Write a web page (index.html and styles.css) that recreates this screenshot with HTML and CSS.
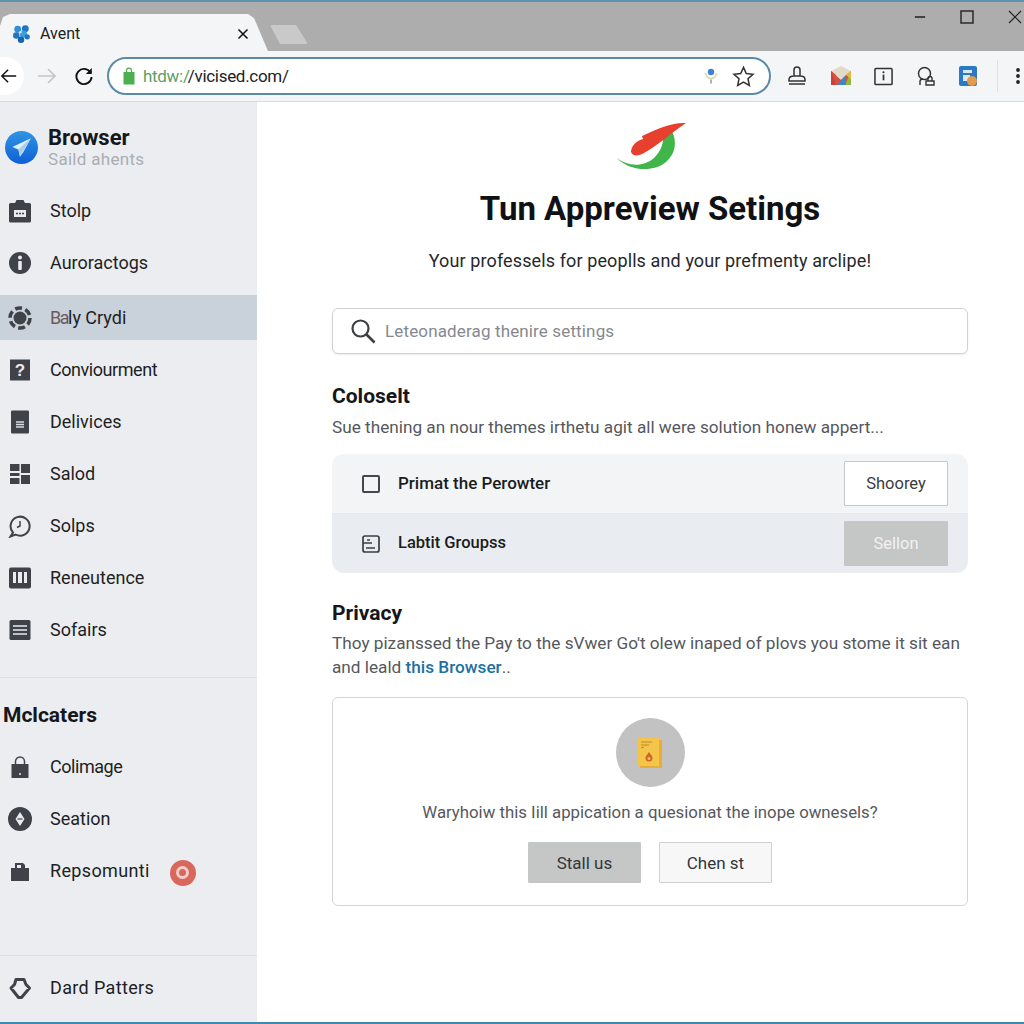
FILE: index.html

```html
<!DOCTYPE html>
<html lang="en">
<head>
  <meta charset="UTF-8" />
  <title>Avent</title>
  <link rel="stylesheet" href="styles.css">
</head>
<body>
  <header class="chrome">
    <div class="tabstrip">
      <div class="tab">
        <svg class="favicon" viewBox="0 0 20 20"><circle cx="6" cy="5" r="3.6" fill="#2f8fd8"/><circle cx="14" cy="4.500" r="3.600" fill="#1f74c4"/><circle cx="4.500" cy="11.500" r="3.400" fill="#1f74c4"/><circle cx="12" cy="10" r="3.800" fill="#3aa0e2"/><circle cx="16" cy="13" r="2.800" fill="#1f74c4"/><circle cx="9.500" cy="16" r="3.400" fill="#1763b0"/><circle cx="9" cy="8" r="1.200" fill="#e9f1f8"/></svg>
        <span class="tab-title">Avent</span>
        <svg class="tab-close" viewBox="0 0 12 12"><path d="M1.500 1.500l9 9M10.500 1.500l-9 9" stroke="#111" stroke-width="1.500" fill="none"/></svg>
      </div>
      <div class="newtab"></div>
      <div class="winctl">
        <svg viewBox="0 0 14 14" class="win-min"><path d="M1 7h12" stroke="#111" stroke-width="1.600"/></svg>
        <svg viewBox="0 0 14 14" class="win-max"><rect x="1" y="1" width="12" height="12" fill="none" stroke="#222" stroke-width="1.400"/></svg>
        <svg viewBox="0 0 14 14" class="win-close"><path d="M1 1l12 12M13 1L1 13" stroke="#222" stroke-width="1.200" fill="none"/></svg>
      </div>
    </div>
    <div class="toolbar">
      <div class="nav">
        <div class="back"><svg viewBox="0 0 20 20" width="20" height="20"><path d="M18 10H2M9 3l-7 7 7 7" stroke="#111" stroke-width="1.600" fill="none"/></svg></div>
        <svg class="fwd" viewBox="0 0 20 20" width="20" height="20"><path d="M1 10h17M11 3l7 7-7 7" stroke="#c4c6c8" stroke-width="1.700" fill="none"/></svg>
        <svg class="reload" viewBox="0 0 20 20" width="20" height="20"><path d="M16.500 6.500A7.600 7.600 0 1 0 17.600 11" stroke="#111" stroke-width="1.900" fill="none"/><path d="M17.800 2v6h-6z" fill="#111"/></svg>
      </div>
      <div class="omnibox">
        <svg class="lock" viewBox="0 0 12 18" width="12" height="18"><path d="M3.500 5V3.600a2.500 2.500 0 0 1 5 0V5" stroke="#4caf50" stroke-width="1.200" fill="none"/><rect x="0.500" y="5" width="11" height="12.500" fill="#4caf50"/></svg>
        <span class="url"><span class="url-scheme">htdw:/</span>/vicised.com/</span>
        <svg class="mic" viewBox="0 0 14 20" width="14" height="20"><path d="M1.500 7a5.500 5.500 0 0 0 11 0" stroke="#d7dbb0" stroke-width="1.600" fill="none"/><circle cx="7" cy="6" r="3.200" fill="#3f83cf"/><path d="M7 13.500v4" stroke="#8a9198" stroke-width="1.400"/></svg>
        <svg class="star" viewBox="0 0 24 24" width="23" height="23"><path d="M12 2.500l2.900 6.400 7 .8-5.200 4.700 1.400 6.900-6.100-3.500-6.100 3.500 1.400-6.900L2.100 9.700l7-.8z" fill="none" stroke="#333" stroke-width="1.600"/></svg>
      </div>
      <div class="extensions">
        <svg viewBox="0 0 20 20" width="20" height="20"><path d="M7 10V4a3 3 0 0 1 6 0v6M2 13.500c0-2 1.500-3.500 5-3.500h6c3.500 0 5 1.500 5 3.500V15H2zM2 18h16" fill="none" stroke="#333" stroke-width="1.500"/></svg>
        <svg viewBox="0 0 22 22" width="22" height="22"><path d="M1 6l10-5 10 5v14H1z" fill="#e3dbc9"/><path d="M1 6v14h5V10z" fill="#c8413c"/><path d="M21 6v14h-5V10z" fill="#8fb93f"/><path d="M1 6l10 9 10-9-6 14H6z" fill="#d7503f"/><path d="M11 15l5-5v10H8z" fill="#3b87cc"/><path d="M16 10l5-4v8z" fill="#e4b83c"/></svg>
        <svg viewBox="0 0 20 20" width="19" height="19"><rect x="1" y="1.500" width="18" height="17" rx="1" fill="none" stroke="#333" stroke-width="1.600"/><path d="M10 8v6" stroke="#333" stroke-width="1.800"/><circle cx="10" cy="5.500" r="1.100" fill="#333"/></svg>
        <svg viewBox="0 0 20 20" width="20" height="20"><circle cx="8.500" cy="7.500" r="6" fill="none" stroke="#333" stroke-width="1.500"/><path d="M4 19v-3.500c0-1.500 1-2.500 3-2.500M10 19v-4h8v4zM12 15v-2.500a2 2 0 0 1 4 0V15" fill="none" stroke="#333" stroke-width="1.400"/></svg>
        <svg viewBox="0 0 20 22" width="20" height="22"><rect x="1" y="1" width="18" height="20" rx="2" fill="#2a78c6"/><path d="M5 5h9v3H5zM5 10h7v6H5z" fill="#d7e8f5"/><circle cx="14" cy="16" r="5" fill="#e39a4a"/></svg>
        <span class="ext-sep"></span>
        <svg class="kebab" viewBox="0 0 6 20" width="6" height="20"><circle cx="3" cy="4" r="1.900" fill="#222"/><circle cx="3" cy="10" r="1.900" fill="#222"/><circle cx="3" cy="16" r="1.900" fill="#222"/></svg>
      </div>
    </div>
  </header>

  <div class="shell">
    <aside class="sidebar">
      <div class="brand">
        <svg viewBox="0 0 32 32" width="33" height="33"><defs><linearGradient id="brandBlue" x1="0" y1="0" x2="0" y2="1"><stop offset="0" stop-color="#2f95e4"/><stop offset="1" stop-color="#0e5fd6"/></linearGradient></defs><circle cx="16" cy="16" r="16" fill="url(#brandBlue)"/><path d="M25 7L7 15.500l6 2.500 1.500 7 3.500-5z" fill="#dcecf9"/><path d="M25 7L13 18l1.500 7z" fill="#a8cdef"/></svg>
        <div class="brand-text">
          <div class="brand-name">Browser</div>
          <div class="brand-sub">Saild ahents</div>
        </div>
      </div>

      <nav class="nav-list">
        <a class="item"><svg viewBox="0 0 24 24"><path d="M2.500 4H7l1.500-3h7L17 4h4.500A1.500 1.500 0 0 1 23 5.500V22a1.500 1.500 0 0 1-1.500 1.500h-19A1.500 1.500 0 0 1 1 22V5.500A1.500 1.500 0 0 1 2.500 4z" fill="#3f4349"/><rect x="6" y="11" width="12" height="7" fill="#e9ebef"/><path d="M8 14.500h8" stroke="#3f4349" stroke-width="1.400" stroke-dasharray="2 1"/></svg><span>Stolp</span></a>
        <a class="item"><svg viewBox="0 0 24 24"><circle cx="12" cy="12" r="11" fill="#3f4349"/><circle cx="12" cy="6.500" r="2" fill="#e9ebef"/><rect x="10.200" y="10" width="3.600" height="9" rx="1" fill="#e9ebef"/></svg><span>Auroractogs</span></a>
        <a class="item active"><svg viewBox="0 0 24 24"><circle cx="12" cy="12" r="6.500" fill="#3f4349"/><circle cx="12" cy="12" r="10" fill="none" stroke="#3f4349" stroke-width="3.600" stroke-dasharray="7 3.470"/></svg><span><span class="smudge">Ba</span>ly Crydi</span></a>
        <a class="item"><svg viewBox="0 0 24 24"><rect x="2" y="1.500" width="20" height="21" fill="#3f4349"/><text x="12" y="18" class="glyph">?</text></svg><span class="tight">Conviourment</span></a>
        <a class="item"><svg viewBox="0 0 24 24"><rect x="3" y="0.500" width="18" height="23" rx="1" fill="#3f4349"/><path d="M8 12h8M8 14.500h8M8 17h8" stroke="#d9dce1" stroke-width="1.300"/></svg><span>Delivices</span></a>
        <a class="item"><svg viewBox="0 0 24 24"><path d="M2 2h9.500v7H2zM13 2h9v9h-9zM2 11h9.500v3H2zM2 16h9.500v6H2zM13 13h9v9h-9z" fill="#3f4349"/></svg><span>Salod</span></a>
        <a class="item"><svg viewBox="0 0 24 24"><path d="M5 18.500A9.500 9.500 0 1 1 7.500 20.500L2.500 22.500z" fill="none" stroke="#3f4349" stroke-width="2"/><path d="M12 7v5l-3 1.500" fill="none" stroke="#3f4349" stroke-width="1.500"/></svg><span>Solps</span></a>
        <a class="item"><svg viewBox="0 0 24 24"><rect x="1" y="1.500" width="22" height="21" rx="2" fill="#3f4349"/><path d="M5 6h3v11H5zM10 6h4v11h-4zM16 6h3v11h-3z" fill="#e9ebef"/></svg><span>Reneutence</span></a>
        <a class="item"><svg viewBox="0 0 24 24"><rect x="1.500" y="2" width="21" height="20" rx="1.500" fill="#3f4349"/><path d="M5 8h14M5 12h14M5 16h14" stroke="#e9ebef" stroke-width="1.500"/></svg><span>Sofairs</span></a>
      </nav>

      <div class="side-rule rule-one"></div>
      <h3 class="side-head">Mclcaters</h3>

      <nav class="nav-list lower">
        <a class="item"><svg viewBox="0 0 24 24"><path d="M7.500 9V6.500a4.500 4.500 0 0 1 9 0V9" fill="none" stroke="#3f4349" stroke-width="1.500"/><path d="M3.500 9h17v14h-17z" fill="#3f4349"/><circle cx="12" cy="19" r="1" fill="#e9ebef"/></svg><span class="tight">Colimage</span></a>
        <a class="item"><svg viewBox="0 0 24 24"><circle cx="12" cy="12" r="12" fill="#3f4349"/><path d="M12 5l4.500 7-4.500 7-4.500-7z" fill="#e9ebef"/><path d="M9.500 12h5" stroke="#3f4349" stroke-width="1.200"/></svg><span>Seation</span></a>
        <a class="item"><svg viewBox="0 0 24 24"><path d="M3 9h4V4h8l2 2v3h4v13H3z" fill="#3f4349"/><path d="M9 6h4v3H9z" fill="#e9ebef"/></svg><span class="wide">Repsomunti</span><i class="alert"><b></b></i></a>
      </nav>

      <div class="side-rule rule-two"></div>
      <a class="item foot"><svg viewBox="0 0 24 24"><path d="M8 3.500h8l2 5 3.500 3.500-8 9.500h-3L3 12l3.500-3.500z" fill="none" stroke="#3f4349" stroke-width="3" stroke-linejoin="round"/></svg><span class="wide">Dard Patters</span></a>
    </aside>

    <main class="content">
      <svg class="logo" viewBox="0 0 76 56" width="76" height="56"><path d="M3 38C14 47 30 47 40 38C47 31 50 23 49 14L58 11C63 22 62 33 52 42C41 52 16 52 3 38z" fill="#3fb54a"/><path d="M72 3C60 2 44 8 28 16L29 19C21 21 17 27 17 32C19 37 25 36 30 33C42 27 58 12 72 3z" fill="#e8402f"/></svg>
      <h1>Tun Appreview Setings</h1>
      <p class="lead">Your professels for peoplls and your prefmenty arclipe!</p>

      <div class="search">
        <svg viewBox="0 0 26 26" width="26" height="26"><circle cx="10.500" cy="10.500" r="8" fill="none" stroke="#3c3f44" stroke-width="2.200"/><path d="M16.500 16.500l8 8" stroke="#3c3f44" stroke-width="2.600"/></svg>
        <span>Leteonaderag thenire settings</span>
      </div>

      <h2 class="sec-head">Coloselt</h2>
      <p class="sec-text">Sue thening an nour themes irthetu agit all were solution honew appert...</p>

      <div class="panel">
        <div class="row">
          <span class="check"></span>
          <span class="row-label label-first">Primat the Perowter</span>
          <button class="btn btn-white">Shoorey</button>
        </div>
        <div class="row row-alt">
          <svg class="row-icon" viewBox="0 0 18 18" width="18" height="18"><rect x="1" y="1" width="16" height="16" rx="2" fill="none" stroke="#3c3f44" stroke-width="1.700"/><path d="M1 8h9M5 5h3M4 13h9" stroke="#3c3f44" stroke-width="1.500" fill="none"/></svg>
          <span class="row-label label-thin">Labtit Groupss</span>
          <button class="btn btn-grey">Sellon</button>
        </div>
      </div>

      <h2 class="sec-head privacy">Privacy</h2>
      <p class="sec-text para">
        <span class="line">Thoy pizanssed the Pay to the sVwer Go't olew inaped of plovs you stome it sit ean</span>
        <span class="line">and leald <a class="link">this Browser</a>..</span>
      </p>

      <div class="card">
        <div class="circle">
          <svg viewBox="0 0 26 32" width="26" height="32"><path d="M1 1h21v28H1z" fill="#f5c54b"/><path d="M22 3h3v28H3v-2h19z" fill="#e9ad37"/><path d="M4 5h11M4 8h8M4 11l3-1" stroke="#b98a2c" stroke-width="1"/><path d="M12 15c2 3 3.500 4 3.500 6a3.500 3.500 0 0 1-7 0c0-2 1.500-3 3.500-6z" fill="#c9662a"/><circle cx="12" cy="21.500" r="1.500" fill="#f5c54b"/></svg>
        </div>
        <p class="card-text">Waryhoiw this Iill appication a quesionat the inope ownesels?</p>
        <div class="card-btns">
          <button class="cbtn cbtn-grey">Stall us</button>
          <button class="cbtn">Chen st</button>
        </div>
      </div>
    </main>
  </div>
  <div class="bottom-line"></div>
</body>
</html>
```

FILE: styles.css

```css
* {
  box-sizing: border-box;
}
html, body {
  margin: 0;
  height: 1024px;
  overflow: hidden;
}
body {
  font-family: Roboto, "Liberation Sans", sans-serif;
  background: #fff;
  color: #1a1c20;
  display: flex;
  flex-direction: column;
}

/* browser chrome */
.chrome {
  height: 102px;
  flex: none;
  background: #f4f5f6;
  border-bottom: 1px solid #d9dadc;
}
.tabstrip {
  height: 51px;
  background: #adadad;
  border-top: 2px solid #5d93ad;
  display: flex;
  align-items: flex-end;
}
.tab {
  width: 268px;
  height: 37px;
  background: #f4f5f6;
  clip-path: polygon(0 12px, 3px 3px, 10px 0, 248px 0, 254px 4px, 268px 37px, 0 37px);
  display: flex;
  align-items: center;
  padding: 2px 0 0 12px;
}
.favicon {
  width: 19px;
  height: 20px;
}
.tab-title {
  font-size: 16px;
  margin-left: 9px;
  color: #222;
  flex: 1;
}
.tab-close {
  width: 12px;
  height: 12px;
  margin-right: 19px;
}
.newtab {
  width: 38px;
  height: 19px;
  background: #c9c9c9;
  margin: 0 0 7px 2px;
  clip-path: polygon(0 0, 26px 0, 38px 19px, 10px 19px);
  border-radius: 3px;
}
.winctl {
  margin-left: auto;
  align-self: flex-start;
  display: flex;
  gap: 34px;
  padding: 8px 2px 0 0;
}
.winctl svg {
  width: 14px;
  height: 14px;
}
.winctl .win-min {
  width: 12px;
}

.toolbar {
  height: 50px;
  display: flex;
  align-items: center;
}
.nav {
  width: 107px;
  flex: none;
  display: flex;
  align-items: center;
}
.back {
  width: 24px;
  height: 38px;
  margin-right: 13px;
  background: #fff;
  border-radius: 0 19px 19px 0;
  display: flex;
  align-items: center;
  justify-content: flex-end;
  padding-right: 6px;
}
.reload {
  margin-left: 17px;
}
.omnibox {
  width: 664px;
  height: 38px;
  background: #fff;
  border: 2px solid #5b8aa6;
  border-radius: 19px;
  display: flex;
  align-items: center;
  padding: 0 14px;
}
.url {
  font-size: 17px;
  letter-spacing: -0.3px;
  margin-left: 8px;
  color: #222;
  flex: 1;
}
.url-scheme {
  color: #5f9d64;
}
.mic {
  margin-right: 14px;
}
.extensions {
  flex: 1;
  display: flex;
  align-items: center;
  padding-left: 16px;
  gap: 22.500px;
}
.ext-sep {
  width: 1px;
  height: 32px;
  background: #e0e1e3;
  margin: 0 -5px 0 -4px;
}

/* sidebar */
.shell {
  flex: 1;
  display: flex;
  min-height: 0;
}
.sidebar {
  width: 257px;
  flex: none;
  background: #ebedf1;
  display: flex;
  flex-direction: column;
  padding-top: 26px;
}
.brand {
  display: flex;
  align-items: center;
  gap: 10px;
  padding-left: 5px;
  height: 38px;
}
.brand-name {
  font-size: 22px;
  font-weight: 700;
  line-height: 24px;
  color: #15171a;
}
.brand-sub {
  font-size: 17px;
  letter-spacing: 0.3px;
  line-height: 18px;
  color: #a9adb2;
}
.nav-list {
  margin-top: 22px;
  display: flex;
  flex-direction: column;
  gap: 7px;
}
.item {
  height: 45px;
  display: flex;
  align-items: center;
  padding-left: 8px;
  font-size: 18px;
  color: #1d1f23;
}
.item svg {
  width: 24px;
  height: 24px;
  flex: none;
  margin-right: 18px;
}
.tight {
  letter-spacing: -0.45px;
}
.wide {
  letter-spacing: 0.35px;
}
.active {
  background: #c9d1db;
  margin-top: 3px;
}
.smudge {
  color: #6a5a60;
  letter-spacing: -1.500px;
}
.glyph {
  font-family: "Liberation Sans", sans-serif;
  font-size: 17px;
  font-weight: 700;
  fill: #e9ebef;
  text-anchor: middle;
}
.side-rule {
  height: 1px;
  background: #dcdee2;
}
.rule-one {
  margin-top: 25px;
}
.side-head {
  font-size: 21px;
  font-weight: 700;
  margin: 24px 0 0 3px;
  line-height: 26px;
  color: #15171a;
}
.lower {
  margin-top: 16px;
}
.alert {
  width: 26px;
  height: 26px;
  border-radius: 50%;
  background: #d9675c;
  margin: 4px 0 0 20px;
  display: flex;
  align-items: center;
  justify-content: center;
}
.alert b {
  width: 13px;
  height: 13px;
  border-radius: 50%;
  background: #d9675c;
  border: 3px solid #f3cfca;
}
.rule-two {
  margin-top: 62px;
}
.foot {
  margin-top: 9px;
}

/* main column */
.content {
  flex: 1;
  padding: 18px 56px 0 75px;
  display: flex;
  flex-direction: column;
}
.logo {
  align-self: center;
  margin-left: 4px;
}
h1 {
  font-size: 33px;
  font-weight: 700;
  line-height: 40px;
  margin: 13px 0 0;
  text-align: center;
  color: #101114;
}
.lead {
  font-size: 18px;
  letter-spacing: 0.11px;
  line-height: 24px;
  margin: 20px 0 0;
  text-align: center;
  color: #26282c;
}
.search {
  height: 46px;
  margin-top: 35px;
  border: 1px solid #cfd1d4;
  border-radius: 6px;
  box-shadow: 0 1px 2px rgba(0, 0, 0, 0.08);
  display: flex;
  align-items: center;
  padding-left: 17px;
  gap: 9px;
  font-size: 17px;
  letter-spacing: 0.14px;
  color: #85898f;
}
.sec-head {
  font-size: 21px;
  font-weight: 700;
  line-height: 26px;
  margin: 29px 0 0;
  color: #15171a;
}
.sec-text {
  font-size: 17.200px;
  line-height: 24px;
  margin: 6px 0 0;
  color: #55585d;
}
.line {
  display: block;
  white-space: nowrap;
}
.panel {
  margin-top: 15px;
  border-radius: 12px;
  overflow: hidden;
}
.row {
  height: 60px;
  background: #f3f4f6;
  border-bottom: 1px solid #e6e8eb;
  display: flex;
  align-items: center;
  padding: 0 20px 0 30px;
}
.row-alt {
  height: 59px;
  background: #e9edf2;
  border-bottom: 0;
}
.check {
  width: 18px;
  height: 18px;
  border: 2px solid #44474c;
  border-radius: 2px;
}
.row-icon {
  flex: none;
}
.row-label {
  font-size: 17px;
  font-weight: 500;
  margin-left: 18px;
  flex: 1;
  color: #1a1c20;
}
.label-first {
  margin-top: -2px;
}
.label-thin {
  font-size: 16.500px;
  margin-top: -2px;
}
.btn {
  width: 104px;
  height: 45px;
  font: 400 16.500px Roboto, sans-serif;
  border-radius: 1px;
}
.btn-white {
  background: #fff;
  border: 1px solid #c4c6c9;
  color: #3a3c40;
}
.btn-grey {
  background: #c5c6c6;
  border: 0;
  color: #f2f2f2;
}
.privacy {
  margin-top: 27px;
}
.para {
  margin-top: 5px;
}
.link {
  color: #1f6f9f;
  font-weight: 500;
}
.card {
  margin-top: 18px;
  height: 209px;
  border: 1px solid #d3d5d8;
  border-radius: 6px;
  display: flex;
  flex-direction: column;
  align-items: center;
  padding-top: 20px;
}
.circle {
  width: 69px;
  height: 69px;
  border-radius: 50%;
  background: #c2c2c2;
  display: flex;
  align-items: center;
  justify-content: center;
}
.card-text {
  font-size: 16.800px;
  line-height: 24px;
  margin: 13px 0 0;
  color: #55585d;
}
.card-btns {
  display: flex;
  gap: 18px;
  margin-top: 18px;
}
.cbtn {
  width: 113px;
  height: 41px;
  font: 400 17px Roboto, sans-serif;
  color: #33353a;
  background: #f7f7f7;
  border: 1px solid #cfd0d2;
  border-radius: 1px;
}
.cbtn-grey {
  background: #c5c6c6;
  border-color: #c5c6c6;
}
.bottom-line {
  position: fixed;
  left: 0;
  right: 0;
  bottom: 0;
  height: 2px;
  background: #3f8ab0;
}
```
